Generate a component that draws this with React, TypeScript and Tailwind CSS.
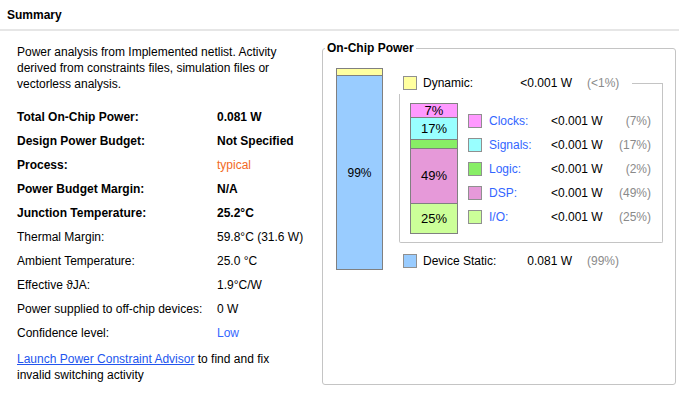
import React from 'react';

type Row = { label: string; value: string; bold?: boolean; tone?: 'orange' | 'blue' };

const rows: Row[] = [
  { label: 'Total On-Chip Power:', value: '0.081 W', bold: true },
  { label: 'Design Power Budget:', value: 'Not Specified', bold: true },
  { label: 'Process:', value: 'typical', bold: true, tone: 'orange' },
  { label: 'Power Budget Margin:', value: 'N/A', bold: true },
  { label: 'Junction Temperature:', value: '25.2°C', bold: true },
  { label: 'Thermal Margin:', value: '59.8°C (31.6 W)' },
  { label: 'Ambient Temperature:', value: '25.0 °C' },
  { label: 'Effective ϑJA:', value: '1.9°C/W' },
  { label: 'Power supplied to off-chip devices:', value: '0 W' },
  { label: 'Confidence level:', value: 'Low', tone: 'blue' },
];

const legend = [
  { name: 'Clocks', pct: '(7%)', swatch: 'bg-[#ff99ff]' },
  { name: 'Signals', pct: '(17%)', swatch: 'bg-[#99ffff]' },
  { name: 'Logic', pct: '(2%)', swatch: 'bg-[#88ee66]' },
  { name: 'DSP', pct: '(49%)', swatch: 'bg-[#e699d9]' },
  { name: 'I/O', pct: '(25%)', swatch: 'bg-[#ccff99]' },
];

function Swatch({ color }: { color: string }) {
  return <div className={`w-[14px] h-[14px] shrink-0 border border-[#909090] ${color}`} />;
}

function TopRow({ color, label, value, pct }: { color: string; label: string; value: string; pct: string }) {
  return (
    <div className="flex items-center pl-[4px]">
      <Swatch color={color} />
      <div className="flex justify-between w-[149px] ml-[6px]">
        <span>{label}</span>
        <span>{value}</span>
      </div>
      <span className="ml-[15px] text-[#8a8a8a]">{pct}</span>
    </div>
  );
}

export default function App() {
  return (
    <div
      className="w-[679px] h-[407px] bg-white text-black text-[12px] leading-[16px]"
      style={{ fontFamily: '"Liberation Sans", Arial, sans-serif' }}
    >
      {/* header */}
      <div className="h-[29px] flex items-center pl-[7px] font-bold">Summary</div>
      <div className="h-[2px] bg-[#e6e6e6]" />

      <div className="flex">
        {/* left column */}
        <div className="w-[322px] pl-[17px] pt-[13px]">
          <p>
            Power analysis from Implemented netlist. Activity
            <br />
            derived from constraints files, simulation files or
            <br />
            vectorless analysis.
          </p>
          <div className="mt-[13px]">
            {rows.map((r) => (
              <div key={r.label} className="h-[24px] flex items-center">
                <span className={`w-[200px] ${r.bold ? 'font-bold' : ''}`}>{r.label}</span>
                <span
                  className={
                    r.tone === 'orange'
                      ? 'text-[#f26a1f]'
                      : r.tone === 'blue'
                        ? 'text-[#3366ff]'
                        : r.bold
                          ? 'font-bold'
                          : ''
                  }
                >
                  {r.value}
                </span>
              </div>
            ))}
          </div>
          <p className="mt-[6px]">
            <span className="text-[#2255ee] underline">Launch Power Constraint Advisor</span> to find and fix
            <br />
            invalid switching activity
          </p>
        </div>

        {/* On-Chip Power group */}
        <fieldset className="mt-[9px] w-[354px] h-[345px] border border-[#c4c4c4] rounded-[3px] pl-[2px]">
          <legend className="px-[2px] font-bold leading-[16px]">On-Chip Power</legend>
          <div className="flex items-start pl-[11px] pt-[12px]">
            {/* total bar */}
            <div className="w-[47px] h-[202px] flex flex-col border border-[#808080]">
              <div className="h-[6px] bg-[#ffffa0]" />
              <div className="flex-1 border-t border-[#808080] bg-[#99ccff] flex items-center justify-center">
                99%
              </div>
            </div>

            <div className="ml-[16px] mt-[4px] w-[264px]">
              <div className="flex h-[22px]">
                <div className="w-[233px] flex items-center">
                  <TopRow color="bg-[#ffffa0]" label="Dynamic:" value="<0.001 W" pct="(<1%)" />
                </div>
                <div className="flex-1 mt-[11px] border-t border-r border-[#c4c4c4]" />
              </div>

              <div className="h-[149px] border-l border-r border-b border-[#c4c4c4] rounded-b-[2px] flex pl-[10px] pt-[9px]">
                {/* dynamic breakdown bar */}
                <div className="w-[48px] h-[131px] flex flex-col border border-[#808080] text-[13px]">
                  <div className="h-[13px] bg-[#ff99ff] flex items-center justify-center">7%</div>
                  <div className="h-[22px] border-t border-[#808080] bg-[#99ffff] flex items-center justify-center">17%</div>
                  <div className="h-[9px] border-t border-[#808080] bg-[#88ee66]" />
                  <div className="h-[55px] border-t border-[#808080] bg-[#e699d9] flex items-center justify-center">49%</div>
                  <div className="h-[30px] border-t border-[#808080] bg-[#ccff99] flex items-center justify-center">25%</div>
                </div>

                <div className="ml-[10px] mt-[6px]">
                  {legend.map((l) => (
                    <div key={l.name} className="h-[24px] flex items-center">
                      <Swatch color={l.swatch} />
                      <span className="ml-[7px] w-[62px] text-[#3366ff]">{l.name}:</span>
                      <span className="w-[52px]">&lt;0.001 W</span>
                      <span className="w-[48px] text-right text-[#8a8a8a]">{l.pct}</span>
                    </div>
                  ))}
                </div>
              </div>

              <div className="mt-[7px] h-[22px] flex items-center">
                <TopRow color="bg-[#99ccff]" label="Device Static:" value="0.081 W" pct="(99%)" />
              </div>
            </div>
          </div>
        </fieldset>
      </div>
    </div>
  );
}
